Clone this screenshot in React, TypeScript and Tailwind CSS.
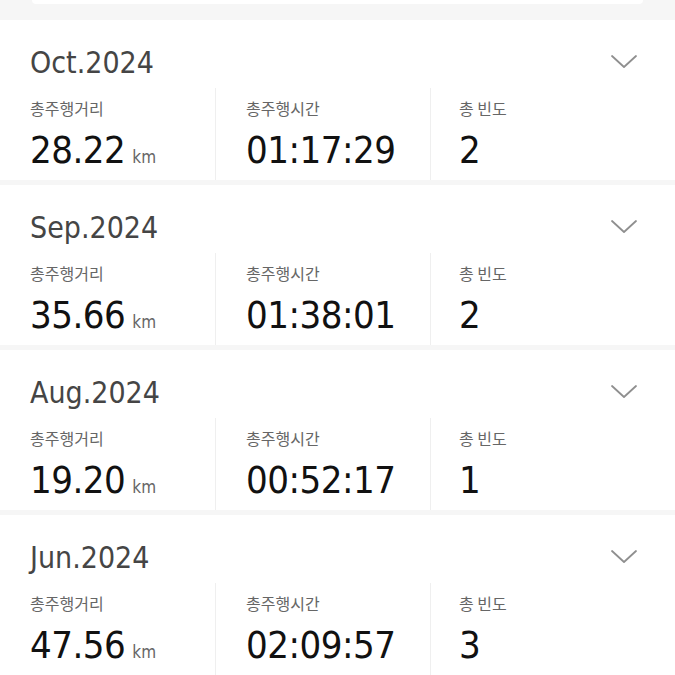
import React from 'react';

interface MonthStat {
  month: string;
  distance: string;
  duration: string;
  count: string;
}

const stats: MonthStat[] = [
  { month: 'Oct.2024', distance: '28.22', duration: '01:17:29', count: '2' },
  { month: 'Sep.2024', distance: '35.66', duration: '01:38:01', count: '2' },
  { month: 'Aug.2024', distance: '19.20', duration: '00:52:17', count: '1' },
  { month: 'Jun.2024', distance: '47.56', duration: '02:09:57', count: '3' },
];

const numFont = { fontFamily: '"DejaVu Sans Condensed", "Liberation Sans Narrow", Roboto, sans-serif' };
const krFont = { fontFamily: '"Noto Sans CJK KR", "Noto Sans", sans-serif' };

function Chevron() {
  return (
    <svg width="28" height="16" viewBox="0 0 28 16" fill="none">
      <polyline points="2,2 14,13 26,2" stroke="#8f8f8f" strokeWidth="1.8" strokeLinecap="round" strokeLinejoin="round" />
    </svg>
  );
}

function MonthCard({ s }: { s: MonthStat }) {
  return (
    <div className="bg-white h-[160px]">
      <div className="flex items-center justify-between pt-[26px] pl-[30px] pr-[37px] h-[60px]">
        <span className="text-[30px] leading-[34px] text-[#454545]" style={numFont}>{s.month}</span>
        <div className="-mt-[3px]">
          <Chevron />
        </div>
      </div>
      <div className="grid grid-cols-3 mt-[8px] h-[92px] pr-[30px]">
        <div className="pl-[30px] pt-[10px]">
          <div className="text-[16px] leading-[20px] text-[#666]" style={krFont}>총주행거리</div>
          <div className="mt-[12px] flex items-baseline">
            <span className="text-[38px] leading-[40px] tracking-[-0.5px] text-[#111]" style={numFont}>{s.distance}</span>
            <span className="ml-[7px] text-[17px] text-[#666]" style={numFont}>km</span>
          </div>
        </div>
        <div className="pl-[30px] pt-[10px] border-l border-[#efefef]">
          <div className="text-[16px] leading-[20px] text-[#666]" style={krFont}>총주행시간</div>
          <div className="mt-[12px] text-[38px] leading-[40px] tracking-[-0.5px] text-[#111]" style={numFont}>{s.duration}</div>
        </div>
        <div className="pl-[28px] pt-[10px] border-l border-[#efefef]">
          <div className="text-[16px] leading-[20px] text-[#666]" style={krFont}>총 빈도</div>
          <div className="mt-[12px] text-[38px] leading-[40px] tracking-[-0.5px] text-[#111]" style={numFont}>{s.count}</div>
        </div>
      </div>
    </div>
  );
}

export default function App() {
  return (
    <div className="w-[675px] h-[675px] overflow-hidden bg-[#f6f6f6]">
      <div className="mx-[32px] h-[4px] bg-white rounded-b-[4px]" />
      <div className="mt-[16px] flex flex-col gap-[5px]">
        {stats.map((s) => (
          <MonthCard key={s.month} s={s} />
        ))}
      </div>
    </div>
  );
}
